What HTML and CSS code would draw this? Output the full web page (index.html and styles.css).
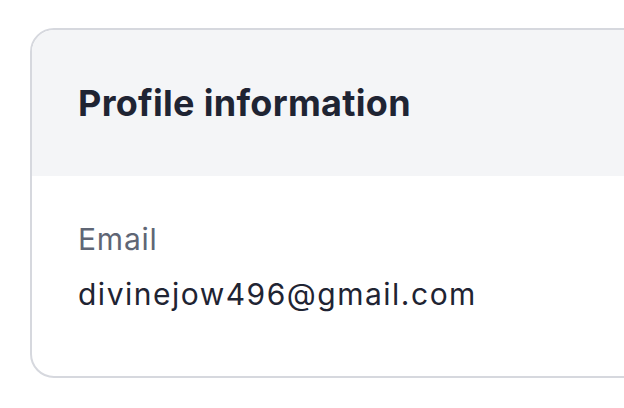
FILE: index.html
```html
<!DOCTYPE html>
<html>
<head>
<meta charset="utf-8">
<link rel="stylesheet" href="styles.css">
</head>
<body>
<div class="page">
  <section class="card">
    <header class="card-header">
      <h2 class="card-title">Profile information</h2>
    </header>
    <div class="card-body">
      <div class="field-label">Email</div>
      <div class="field-value">divinejow496@gmail.com</div>
    </div>
  </section>
</div>
</body>
</html>
```
FILE: styles.css
```css
html, body {
  margin: 0;
  padding: 0;
  background: #ffffff;
  overflow: hidden;
}
body {
  font-family: Inter, "Noto Sans", sans-serif;
}
.page {
  width: 624px;
  height: 408px;
  padding: 28px 0 0 30px;
  box-sizing: border-box;
  overflow: hidden;
}
.card {
  width: 720px;
  border: 2px solid #d6d8de;
  border-radius: 24px;
  overflow: hidden;
  background: #fff;
}
.card-header {
  background: #f4f5f7;
  height: 146px;
  display: flex;
  align-items: center;
  padding-left: 46px;
}
.card-title {
  margin: 0;
  font-size: 36px;
  font-weight: 700;
  color: #1f2433;
  letter-spacing: 0.3px;
}
.card-body {
  height: 200px;
  padding: 43px 46px 0;
  box-sizing: border-box;
}
.field-label {
  font-size: 30px;
  line-height: 40px;
  color: #5f6675;
  letter-spacing: 0.8px;
}
.field-value {
  margin-top: 15px;
  font-size: 30px;
  line-height: 40px;
  color: #1f2433;
  letter-spacing: 1.5px;
}
```
